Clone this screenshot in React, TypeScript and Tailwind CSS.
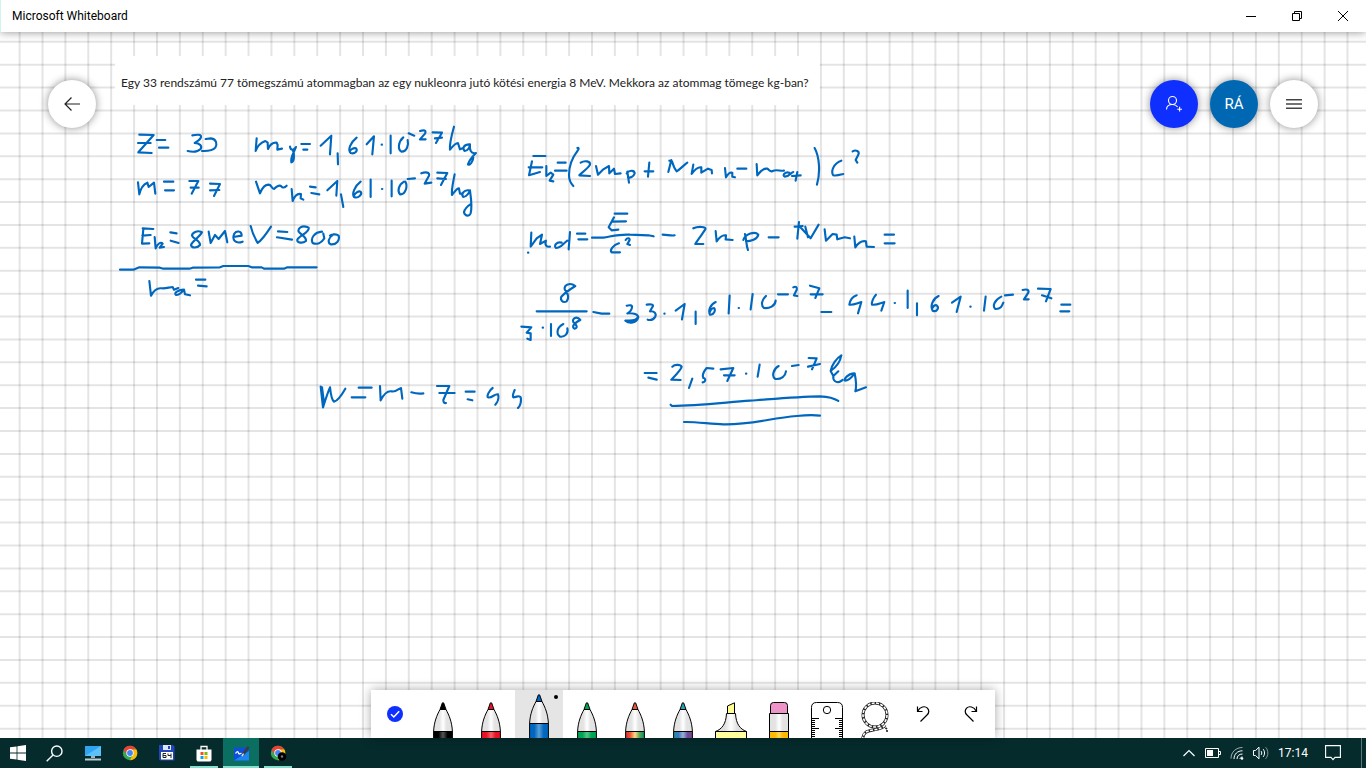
import React from 'react';

interface InkGroup {
  x: number;
  y: number;
  strokes: string[];
}

// Pen strokes, stored at three times the size of the board
const ink: InkGroup[] = [
  {
    x: 110,
    y: 115,
    strokes: [
      // Z = 33
      'M88 59L131 60L85 112L125 114M84 84H122M140 75H166M147 98H175',
      'M247 61C262 58 275 58 273 66C271 76 255 82 254 84C270 84 277 94 272 102C262 112 245 111 233 108M287 72L303 70C320 72 322 88 316 98C308 107 298 109 276 108',
      // mp = 1,61 . 10^-27 kg
      'M440 70L437 108C441 96 450 84 466 78L473 83L474 102C480 88 490 82 500 83L503 90L502 104L516 101',
      'M540 95C542 108 552 106 558 96C552 112 541 126 544 142C553 140 554 120 549 106M574 87H600M580 104H592',
      'M632 92L664 62L660 118M683 115L684 148M740 68C722 82 712 105 722 114C735 118 745 106 738 100C730 98 722 104 720 108M770 88L792 64L787 118M815 89H816M842 62V115M880 67C865 80 862 104 875 110C890 110 897 90 893 75',
      'M896 55L913 62M930 48C942 44 950 46 945 56L930 73H947M968 52L996 53L978 84M975 70L996 68',
      'M1032 35C1025 60 1018 85 1020 104C1028 94 1036 84 1044 84L1050 103L1060 99M1078 88C1062 88 1056 100 1064 108C1075 108 1080 95 1080 88C1078 105 1083 118 1098 114C1090 122 1078 135 1074 148C1080 153 1090 140 1091 120',
      // m = 77
      'M84 202L88 238C92 220 102 207 112 203L116 216L132 203L136 236M162 200H190M165 226H192M238 198H265L245 236M242 218H266M300 206L330 207L312 243M300 226L328 225',
      // mn = 1,61 . 10^-27 kg
      'M438 200L450 235C456 220 464 209 476 209C486 210 484 222 492 222C500 214 508 208 514 214C518 220 524 218 530 212M545 222L548 258C555 240 565 235 573 237L572 250L580 254M600 215L617 217M604 234L628 238',
      'M652 226L682 198L679 242M693 238L700 276M752 200C735 213 725 235 732 246C745 252 758 238 752 230C745 226 735 236 733 240M782 194V246M816 222H817M845 197V244M882 200C865 210 862 228 870 238C885 240 895 215 886 200',
      'M893 192L915 190M934 175C948 170 960 172 957 182L944 206L964 203M982 173L1012 174L993 210M982 190L1008 192',
      'M1034 178C1030 200 1024 222 1026 240C1034 230 1040 220 1047 220L1050 236L1058 236M1076 226C1062 224 1052 238 1060 246C1070 246 1078 232 1080 226C1082 245 1088 270 1082 295C1078 305 1065 304 1062 292C1064 280 1078 270 1084 266',
      // Eb = 8 MeV = 800
      'M98 340L130 342M100 342L96 386L118 385M97 362L122 360M134 366L137 400C142 388 152 378 158 386L149 398L162 396M181 352L200 355M182 377L206 384',
      'M273 350C262 346 246 352 246 362C250 372 272 378 270 390C262 400 245 400 243 390C246 378 268 368 276 352M296 350L302 384L315 360L326 372L345 348L352 382M370 366L395 362C395 346 378 346 372 358C366 374 376 388 398 380',
      'M422 333C426 350 436 372 443 384C455 376 472 352 483 335M504 349L532 351M501 367L546 374M592 336C575 330 563 340 566 350C574 360 590 366 588 378C578 386 560 384 562 374C568 362 600 352 596 338M636 350C615 352 600 368 608 384C620 390 634 384 643 370L640 356M670 358C655 368 652 384 662 388C680 390 690 376 686 362C680 356 665 358 660 362',
      'M30 464H70L88 457L150 458L160 461H238L248 458L330 457L340 453H415L425 457H455L462 461H522L532 457H620',
      // ma =
      'M118 498L123 542C132 525 142 518 155 520C165 522 180 516 188 516L192 524L205 519M222 524C205 524 190 534 198 540C212 540 218 528 222 524L225 538L240 541M258 494H286M264 512L290 514',
    ],
  },
  {
    x: 510,
    y: 130,
    strokes: [
      // Eb = (Zmp + Nmn - mat) c2
      'M70 78H106M66 94L57 136L90 126M56 112H97M109 108V138L122 128L130 134L119 152L130 154M143 98H167M135 122H170M202 54C208 52 206 58 203 62C186 84 177 110 177 135C177 150 184 162 190 168',
      'M212 98C225 90 242 94 240 104C235 115 210 132 208 136L240 138M258 108L264 134L280 118L297 108L298 130L312 116L315 132L332 130M352 125L357 158M350 130C360 118 374 122 374 130C370 142 360 144 354 142M404 124H430M418 98L414 140',
      'M484 90L475 126M478 92L486 94C490 108 495 118 500 124C510 118 522 105 532 98M550 104L545 132C555 118 565 110 574 112V128L594 116L605 120L606 130M645 114L648 142C655 130 660 126 667 128V140L675 142M682 116H709',
      'M740 102L742 136C752 122 762 114 772 116C780 122 782 128 790 122C800 118 812 124 822 122M838 128C825 124 816 136 824 140C838 140 842 128 850 126M846 138L872 136M862 126L857 152M914 54C928 80 932 125 921 164M994 92C970 100 962 125 970 136C980 138 992 134 1000 132M1028 64C1038 58 1050 64 1045 74L1037 90L1042 98',
      // mat = E / c2 - Zmp - Nmn =
      'M64 308L62 350L80 325L96 314L90 342L108 332C103 345 110 352 120 350M155 338C140 334 130 348 138 354C152 354 158 342 172 332M180 306L176 358M54 368H55M201 311H226M205 328H232',
      'M246 323H280C310 318 330 312 360 314L415 316L431 319M314 251H352M312 262L296 292L305 301L325 299M306 275L348 274M327 340C310 345 298 360 305 367H330M347 330C352 322 362 324 358 332L352 342L360 345M458 314C470 314 485 318 494 316',
      'M550 295C565 288 590 290 586 298C575 315 560 335 556 342H580M617 303L620 334C628 322 638 314 648 316L647 328L668 330M705 312C710 330 708 345 714 360M700 330C706 312 735 302 745 314C742 328 722 334 708 334M776 322H806',
      'M854 290L878 288M867 276L862 326M870 290L902 325L926 284M886 290L894 322M944 298L948 332L968 312L980 314L982 328L1004 322L1020 325M1033 320L1036 352C1045 338 1058 332 1068 334L1070 350L1092 351M1124 314H1152M1124 340H1154',
    ],
  },
  {
    x: 510,
    y: 270,
    strokes: [
      // 8 / 3.10^8 - 33 . 1,61 . 10^-2
      'M196 48C180 36 162 44 164 58C172 68 180 82 170 94C158 100 150 90 154 80C165 68 180 58 196 48M80 124H230M250 126L275 131H298M34 170L64 172L50 188L62 190L62 210L52 206M98 173H99M123 162V198M160 162C140 172 138 192 150 200C165 202 176 190 172 175M211 150C200 136 185 146 190 156C198 164 206 172 194 176C184 172 190 160 211 150',
      'M350 107C360 104 368 106 366 112C364 124 356 128 352 130C372 128 384 134 385 142C380 160 358 162 346 152C360 150 380 155 384 140M410 104C422 102 430 103 429 108L420 124C432 122 440 130 436 140C430 150 420 151 413 149M463 131H464',
      'M497 122L524 102L516 148M557 125V162M617 96C600 104 594 122 600 134C612 136 618 120 612 114C605 114 600 122 600 126M659 77L656 130M686 114H687M728 72L722 118M768 78C755 90 752 106 762 114C778 116 796 108 797 92M804 73H834M850 52C858 48 862 52 860 60L852 76L862 78',
      // = 2,57 . 10^-
      'M404 309H440M415 323L440 329M487 290C495 282 512 284 515 290C512 302 490 322 484 329L512 330M547 326L537 354M610 296L590 294C580 306 577 318 580 324C588 324 588 336 578 337M632 298L670 294L652 333M642 316H674M708 311H709M749 284L743 320M806 288C790 296 784 320 796 327C815 328 826 318 828 304M846 288L866 285',
      'M482 404L486 408C560 408 640 398 720 392C800 386 860 380 930 379C960 380 975 386 985 393M522 456C560 455 600 462 640 463C720 465 780 445 860 438C900 434 915 435 930 437',
    ],
  },
  {
    x: 790,
    y: 270,
    strokes: [
      // 7 - 44 . 1,61 . 10^-27 =
      'M60 47L88 55L76 84M62 73H98M94 126H124M200 76C188 80 180 92 178 104C190 106 200 100 214 96L204 130M258 74C250 82 244 98 246 104C258 106 270 100 283 96L274 122M314 99H315M353 62V114M381 100V136M446 78C428 86 420 108 428 122C442 128 448 112 440 106C434 104 428 112 426 116M486 98L512 80L500 126M541 110H542M587 80L582 122',
      'M634 80C614 90 606 108 616 117C632 118 636 108 640 98M645 76L669 74M698 60C710 56 718 60 715 68L702 88H716M744 56L782 57L768 94M756 76L784 85M814 104H841M811 124H838',
      // 7 kg
      'M56 264L80 265L66 298M54 290L90 282M154 256C150 280 132 296 122 303C125 285 140 264 154 256M122 303L130 318L145 304M130 318C128 332 138 338 148 336L158 330M190 310C175 312 162 325 165 332C180 332 190 315 194 310C198 330 200 350 196 364L228 352',
    ],
  },
  {
    x: 300,
    y: 360,
    strokes: [
      // N = m - Z = 44
      'M62 80L69 142C76 120 84 95 90 82C92 100 95 120 102 125C115 122 128 100 136 86M66 82L72 128M176 83H215M155 112H196M240 78L242 121C250 105 262 92 275 94C285 98 298 85 303 84L307 116M334 97C345 100 358 102 370 100M411 78H448L430 120C430 128 434 130 438 129M418 99H464M497 95H524M503 118L517 121M578 84C566 92 560 110 564 112C575 116 585 100 594 103C598 115 592 128 586 134M644 90C640 100 636 108 640 112C650 112 658 104 662 112C665 125 660 140 654 144',
    ],
  },
];

const GRID = 22.895;

const Board: React.FC = () => (
  <svg className="absolute inset-0 w-full h-full" role="img" aria-label="Whiteboard ink">
    <g transform="translate(0 -32)">
      <g stroke="#000" strokeOpacity="0.105" strokeWidth="2">
        {Array.from({ length: 110 }, (_, i) => (
          <line key={`v${i}`} x1={19.6 + i * GRID} x2={19.6 + i * GRID} y1="0" y2="1600" />
        ))}
        {Array.from({ length: 70 }, (_, i) => (
          <line key={`h${i}`} y1={41.8 + i * GRID} y2={41.8 + i * GRID} x1="0" x2="2600" />
        ))}
      </g>
      {ink.map((group, i) => (
        <g
          key={i}
          transform={`translate(${group.x} ${group.y}) scale(0.3333)`}
          fill="none"
          stroke="#0067bf"
          strokeWidth="6.4"
          strokeLinecap="round"
          strokeLinejoin="round"
        >
          {group.strokes.map((d, j) => (
            <path key={j} d={d} />
          ))}
        </g>
      ))}
    </g>
  </svg>
);

interface PenProps {
  id: string;
  tip: string;
  stops: string[];
}

const Pen: React.FC<PenProps> = ({ id, tip, stops }) => (
  <svg width="20" height="48" viewBox="0 0 20 48" className="shrink-0">
    <defs>
      <linearGradient id={`${id}-barrel`}>
        {stops.map((color, i) => (
          <stop key={i} offset={i / (stops.length - 1)} stopColor={color} />
        ))}
      </linearGradient>
      <linearGradient id={`${id}-body`}>
        <stop offset="0.3" stopColor="#e3e3e3" />
        <stop offset="0.5" stopColor="#fff" />
        <stop offset="0.7" stopColor="#e3e3e3" />
      </linearGradient>
    </defs>
    <path d="M7 7.5H13C16 13 19 20 19.4 29.5H.6C1 20 4 13 7 7.5Z" fill={`url(#${id}-body)`} stroke="#000" />
    <path d="M9.3 1Q10 0 10.7 1L13 7.5H7Z" fill={tip} stroke="#000" />
    <path d="M.6 29.5H19.4V49H.6Z" fill={`url(#${id}-barrel)`} stroke="#000" />
  </svg>
);

const pens = [
  { name: 'Black pen', tip: '#000', stops: ['#000', '#000', '#555', '#000', '#000'] },
  { name: 'Red pen', tip: '#e81224', stops: ['#e81224', '#e81224', '#f4606c', '#e81224', '#e81224'] },
  { name: 'Blue pen', tip: '#0067bf', stops: ['#0067bf', '#0067bf', '#5a9fd8', '#0067bf', '#0067bf'], active: true },
  { name: 'Green pen', tip: '#00a551', stops: ['#00a551', '#00a551', '#55c588', '#00a551', '#00a551'] },
  { name: 'Rainbow pen', tip: '#e8553a', stops: ['#c8283c', '#ee5a30', '#ffd890', '#5aa848', '#008c78'] },
  { name: 'Galaxy pen', tip: '#1fa3b5', stops: ['#2090a8', '#3878b8', '#98b0d8', '#6a4a98', '#804888'] },
];

const Highlighter = () => (
  <svg width="32" height="48" viewBox="0 0 32 48">
    <defs>
      <linearGradient id="marker">
        <stop offset="0.3" stopColor="#e0e0e0" />
        <stop offset="0.5" stopColor="#fff" />
        <stop offset="0.7" stopColor="#e0e0e0" />
      </linearGradient>
    </defs>
    <path d="M12.5 11.5V4L19.5 .8V11.5Z" fill="#ffff91" stroke="#000" />
    <path d="M11.5 11.5H20.5C21 22 25 27 31.5 29.5H.5C7 27 11 22 11.5 11.5Z" fill="url(#marker)" stroke="#000" />
    <path d="M.5 29.5H31.5V49H.5Z" fill="#ffff9e" stroke="#000" />
  </svg>
);

const Eraser = () => (
  <svg width="20" height="48" viewBox="0 0 20 48">
    <defs>
      <linearGradient id="sleeve">
        <stop offset="0.3" stopColor="#e3e3e3" />
        <stop offset="0.5" stopColor="#fff" />
        <stop offset="0.7" stopColor="#e3e3e3" />
      </linearGradient>
      <linearGradient id="sleeve-end">
        <stop offset="0.3" stopColor="#ffb900" />
        <stop offset="0.5" stopColor="#ffd75e" />
        <stop offset="0.7" stopColor="#ffb900" />
      </linearGradient>
    </defs>
    <path d="M1.5 11.5V3.5Q1.5 .5 4.5 .5H15.5Q18.5 .5 18.5 3.5V11.5Z" fill="#ef94c8" stroke="#000" />
    <path d="M.5 11.5H19.5V29.5H.5Z" fill="url(#sleeve)" stroke="#000" />
    <path d="M.5 29.5H19.5V49H.5Z" fill="url(#sleeve-end)" stroke="#000" />
  </svg>
);

const Ruler = () => (
  <svg width="32" height="48" viewBox="0 0 32 48" fill="none" stroke="#000">
    <path d="M.5 49V5.5Q.5 .5 5.5 .5H26.5Q31.5 .5 31.5 5.5V49" />
    <circle cx="16" cy="8" r="3.7" />
    <path d="M0 16.5H8M0 18.5H4M0 20.5H4M0 22.5H4M0 24.5H4M0 26.5H8M0 28.5H4M0 30.5H4M0 32.5H4M0 34.5H4" />
    <path d="M32 16.5H24M32 18.5H28M32 20.5H28M32 22.5H28M32 24.5H28M32 26.5H24M32 28.5H28M32 30.5H28M32 32.5H28M32 34.5H28" />
  </svg>
);

const Lasso = () => (
  <svg width="28" height="48" viewBox="0 0 28 48" fill="none">
    <g stroke="#222" strokeWidth="3">
      <circle cx="14" cy="13" r="12" />
      <path d="M1.5 38C2 30 6 29 12 28C19 27 23 25 24 23" />
      <path d="M22 24L26 27V31" strokeWidth="1.6" strokeDasharray="2 1" />
    </g>
    <g stroke="#fff" strokeWidth="1.6" strokeDasharray="3 1.4">
      <circle cx="14" cy="13" r="12" />
      <path d="M1.5 38C2 30 6 29 12 28C19 27 23 25 24 23" />
    </g>
  </svg>
);

const Undo = ({ flip = false }: { flip?: boolean }) => (
  <svg width="14" height="18" viewBox="0 0 14 18" fill="none" stroke="#000" strokeWidth="1.2" className={flip ? '-scale-x-100' : ''}>
    <path d="M1.5 1.5V6.5H6.5M1.8 6.2C4 1.5 9 .6 11.4 3.2C13.6 5.8 12.8 8.2 11 10L4.5 16.5" />
  </svg>
);

const tools = [
  { name: 'Highlighter', icon: <Highlighter /> },
  { name: 'Eraser', icon: <Eraser /> },
  { name: 'Ruler', icon: <Ruler /> },
  { name: 'Lasso select', icon: <Lasso /> },
];

const Toolbar: React.FC = () => (
  <div className="flex h-12 bg-white shadow-[0_0_10px_rgba(0,0,0,0.35)]">
    <button aria-label="Done inking" className="w-12 flex items-center justify-center">
      <svg width="16" height="16" viewBox="0 0 16 16">
        <circle cx="8" cy="8" r="8" fill="#0f2fff" />
        <path d="M4 8.3L6.8 11L12.2 5.2" fill="none" stroke="#fff" strokeWidth="1.5" />
      </svg>
    </button>
    {pens.map((pen, i) => (
      <button
        key={pen.name}
        aria-label={pen.name}
        className={`relative w-12 flex justify-center overflow-hidden ${pen.active ? 'bg-[#e5e5e5] pt-1' : 'pt-3'}`}
      >
        <Pen id={`pen${i}`} tip={pen.tip} stops={pen.stops} />
        {pen.active && <span className="absolute top-[5px] right-[5px] size-1 rounded-full bg-black" />}
      </button>
    ))}
    {tools.map((tool) => (
      <button key={tool.name} aria-label={tool.name} className="w-12 flex justify-center overflow-hidden pt-3">
        {tool.icon}
      </button>
    ))}
    <button aria-label="Undo" className="w-12 flex items-center justify-center">
      <Undo />
    </button>
    <button aria-label="Redo" className="w-12 flex items-center justify-center">
      <Undo flip />
    </button>
  </div>
);

const Chrome = () => (
  <svg width="16" height="16" viewBox="0 0 16 16">
    <circle cx="8" cy="8" r="7.2" fill="#34a853" />
    <path d="M8 8L1.6 4.6A7.3 7.3 0 0 1 14.5 4.6H8Z" fill="#ea4335" />
    <path d="M8 4.6H14.5A7.2 7.2 0 0 1 8 15.2L11 9.6Z" fill="#fbbc05" />
    <path d="M1.6 4.6L5 10L8 4.6Z" fill="#ea4335" />
    <circle cx="8" cy="8" r="3.7" fill="#fff" />
    <circle cx="8" cy="8" r="2.9" fill="#4285f4" />
  </svg>
);

const apps = [
  {
    name: 'This PC',
    icon: (
      <svg width="18" height="16" viewBox="0 0 18 16">
        <path d="M1 1H17V11H1Z" fill="#2fa4f0" />
        <path d="M1 11L17 1V11Z" fill="#5cc0fa" />
        <path d="M7 11H11V13H7Z" fill="#9fb4c0" />
        <path d="M1 13.5H17V15.5H1Z" fill="#b8cbd6" />
      </svg>
    ),
  },
  { name: 'Google Chrome', icon: <Chrome /> },
  {
    name: 'Total Commander',
    icon: (
      <svg width="16" height="16" viewBox="0 0 16 16">
        <path d="M0 0H14L15.5 1.5V15.5H1L0 14.5Z" fill="#2346b8" />
        <path d="M4 0H12V5H4Z" fill="#dfe6f5" />
        <path d="M9 1H11V4H9Z" fill="#2346b8" />
        <path d="M2 7H14V14.5H2Z" fill="#fff" />
        <path d="M7 8.5H4V12.5H7V10.5H4M9 8.5V10.5H12M12 8.5V13" fill="none" stroke="#222" />
      </svg>
    ),
  },
  {
    name: 'Microsoft Store',
    state: 'open',
    icon: (
      <svg width="16" height="17" viewBox="0 0 16 17">
        <path d="M5 5V1.5H11V5" fill="none" stroke="#fff" strokeWidth="1.3" />
        <path d="M.5 4.5H15.5V15L14.5 16.5H1.5L.5 15Z" fill="#fff" />
        <path d="M4.5 7H7.5V10H4.5Z" fill="#f25022" />
        <path d="M8.5 7H11.5V10H8.5Z" fill="#7fba00" />
        <path d="M4.5 11H7.5V14H4.5Z" fill="#00a4ef" />
        <path d="M8.5 11H11.5V14H8.5Z" fill="#ffb900" />
      </svg>
    ),
  },
  {
    name: 'Microsoft Whiteboard',
    state: 'active',
    icon: (
      <svg width="17" height="16" viewBox="0 0 17 16">
        <path d="M1 2.5H16V15.5H1Z" fill="#0b50d8" />
        <path d="M1 15.5L16 6V15.5Z" fill="#1c86ee" />
        <path d="M2.5 8.5C4 6 5 6 5.5 8C6 10 7.5 8 8.5 8.5" fill="none" stroke="#fff" strokeWidth="1.3" />
        <path d="M10 9.5L15.5 2" stroke="#3c3c3c" strokeWidth="2.6" />
        <path d="M8.8 11L10.6 8.6" stroke="#ddd" strokeWidth="1.4" />
      </svg>
    ),
  },
  {
    name: 'Google Chrome profile',
    state: 'open',
    icon: (
      <svg width="17" height="16" viewBox="0 0 17 16">
        <Chrome />
        <circle cx="12" cy="11.5" r="4.3" fill="#000" />
        <circle cx="12" cy="11.5" r="1.2" fill="#777" />
      </svg>
    ),
  },
];

const Taskbar: React.FC = () => (
  <footer className="flex h-[30px] shrink-0 bg-[#062b2d] text-white">
    <button aria-label="Start" className="w-9 flex items-center justify-center">
      <svg width="16" height="16" viewBox="0 0 16 16" fill="#fff">
        <path d="M0 2.3L6.6 1.4V7.6H0ZM7.4 1.3L16 0V7.6H7.4ZM0 8.4H6.6V14.6L0 13.7ZM7.4 8.4H16V16L7.4 14.7Z" />
      </svg>
    </button>
    <button aria-label="Search" className="w-9 flex items-center justify-center mr-[3px]">
      <svg width="17" height="17" viewBox="0 0 17 17" fill="none" stroke="#fff" strokeWidth="1.4">
        <circle cx="10.8" cy="6.2" r="5.2" />
        <path d="M7 10L.7 16.3" />
      </svg>
    </button>
    <nav className="flex gap-px" aria-label="Apps">
      {apps.map((app) => (
        <button
          key={app.name}
          aria-label={app.name}
          className={`relative w-9 flex items-center justify-center ${app.state === 'active' ? 'bg-[#0a6e60]' : ''}`}
        >
          {app.icon}
          {app.state && (
            <span className={`absolute bottom-0 h-[2px] bg-[#83e0cd] ${app.state === 'active' ? 'inset-x-0' : 'inset-x-1'}`} />
          )}
        </button>
      ))}
    </nav>
    <div className="ml-auto flex items-center">
      <button aria-label="Show hidden icons" className="w-6 flex justify-center">
        <svg width="12" height="8" viewBox="0 0 12 8" fill="none" stroke="#fff" strokeWidth="1.2">
          <path d="M.5 7L6 1.5L11.5 7" />
        </svg>
      </button>
      <button aria-label="Battery" className="w-6 flex justify-center">
        <svg width="16" height="10" viewBox="0 0 16 10" fill="none" stroke="#fff">
          <path d="M.5 .5H13.5V9.5H.5ZM14 3.5H15.5V6.5H14" />
          <path d="M2 2H8V8H2Z" fill="#fff" stroke="none" />
        </svg>
      </button>
      <button aria-label="Network" className="w-6 flex justify-center">
        <svg width="14" height="14" viewBox="0 0 14 14" fill="none" stroke="#fff">
          <path d="M1 12.5C1 6 6 1.5 12.5 1.5" opacity="0.6" />
          <path d="M4 13C4 8 7.5 4.8 12.5 4.8M7 13C7 10 9 8 12.5 8M10 13C10 12 11 11 12.5 11" />
          <circle cx="12" cy="12.5" r="1.3" fill="#fff" stroke="none" />
        </svg>
      </button>
      <button aria-label="Volume" className="w-6 flex justify-center">
        <svg width="16" height="14" viewBox="0 0 16 14" fill="none" stroke="#fff">
          <path d="M.5 4.5H2.5L6 1.2V12.8L2.5 9.5H.5Z" />
          <path d="M8 5C9 6 9 8 8 9M10 3C12 5 12 9 10 11" />
          <path d="M12.5 1.2C15.6 4 15.6 10 12.5 12.8" opacity="0.5" />
        </svg>
      </button>
      <time className="w-10 text-center text-xs">17:14</time>
      <button aria-label="Notifications" className="w-10 flex justify-center">
        <svg width="16" height="16" viewBox="0 0 16 16" fill="none" stroke="#fff" strokeWidth="1.1">
          <path d="M.6 .6H15.4V12.4H10L8 14.6L6 12.4H.6Z" />
        </svg>
      </button>
      <button aria-label="Show desktop" className="ml-2 h-[30px] w-[5px] border-l border-[#5d7778]" />
    </div>
  </footer>
);

const round = 'size-12 rounded-full flex items-center justify-center shadow-[0_0_8px_rgba(0,0,0,0.45)]';

export default function App() {
  return (
    <div className="h-screen flex flex-col overflow-hidden bg-white text-black font-['Roboto',sans-serif]">
      <header className="relative z-10 flex h-8 shrink-0 items-center justify-between bg-white border-l border-[#d3f3ef] pl-[11px] shadow-[0_0_10px_rgba(0,0,0,0.45)]">
        <h1 className="text-xs">Microsoft Whiteboard</h1>
        <div className="flex h-full">
          <button aria-label="Minimize" className="w-[46px] flex items-center justify-center">
            <svg width="10" height="10" viewBox="0 0 10 10" stroke="#000"><path d="M0 5.5H10" /></svg>
          </button>
          <button aria-label="Restore" className="w-[46px] flex items-center justify-center">
            <svg width="10" height="10" viewBox="0 0 10 10" fill="none" stroke="#000">
              <path d="M.5 2.5H7.5V9.5H.5ZM2.5 2.5V.5H9.5V7.5H7.5" />
            </svg>
          </button>
          <button aria-label="Close" className="w-[46px] flex items-center justify-center">
            <svg width="10" height="10" viewBox="0 0 10 10" stroke="#000"><path d="M0 0L10 10M10 0L0 10" /></svg>
          </button>
        </div>
      </header>

      <main className="relative flex flex-1 flex-col">
        <Board />
        {/* Task pasted on the board */}
        <p className="absolute left-[115px] top-6 h-[49px] w-[705px] bg-white pl-[6px] font-['Lato',sans-serif] text-xs leading-[54px] whitespace-nowrap text-[#222]">
          Egy 33 rendszámú 77 tömegszámú atommagban az egy nukleonra jutó kötési energia 8 MeV. Mekkora az atommag tömege kg-ban?
        </p>

        <div className="relative flex justify-between px-12 pt-12">
          <button aria-label="Back" className={`${round} bg-white`}>
            <svg width="16" height="14" viewBox="0 0 16 14" fill="none" stroke="#222" strokeWidth="1.2">
              <path d="M16 7H1M7.5 .5L1 7L7.5 13.5" />
            </svg>
          </button>
          <div className="flex gap-3">
            <button aria-label="Invite someone" className={`${round} bg-[#0f2fff]`}>
              <svg width="18" height="18" viewBox="0 0 18 18" fill="none" stroke="#fff" strokeWidth="1.1">
                <circle cx="7.5" cy="5.5" r="4" />
                <path d="M1.5 14.5C1.5 11 4 9.5 7.5 9.5C10 9.5 11.8 10.8 12.6 12M12.2 14.2H17M14.6 11.8V16.6" />
              </svg>
            </button>
            <button aria-label="Account" className={`${round} bg-[#0068b3] text-[15px] text-white`}>RÁ</button>
            <button aria-label="Settings" className={`${round} bg-white`}>
              <svg width="16" height="12" viewBox="0 0 16 12" stroke="#444" strokeWidth="1.4">
                <path d="M0 1.7H16M0 6H16M0 10.3H16" />
              </svg>
            </button>
          </div>
        </div>

        <div className="relative mt-auto flex justify-center">
          <Toolbar />
        </div>
      </main>

      <Taskbar />
    </div>
  );
}
